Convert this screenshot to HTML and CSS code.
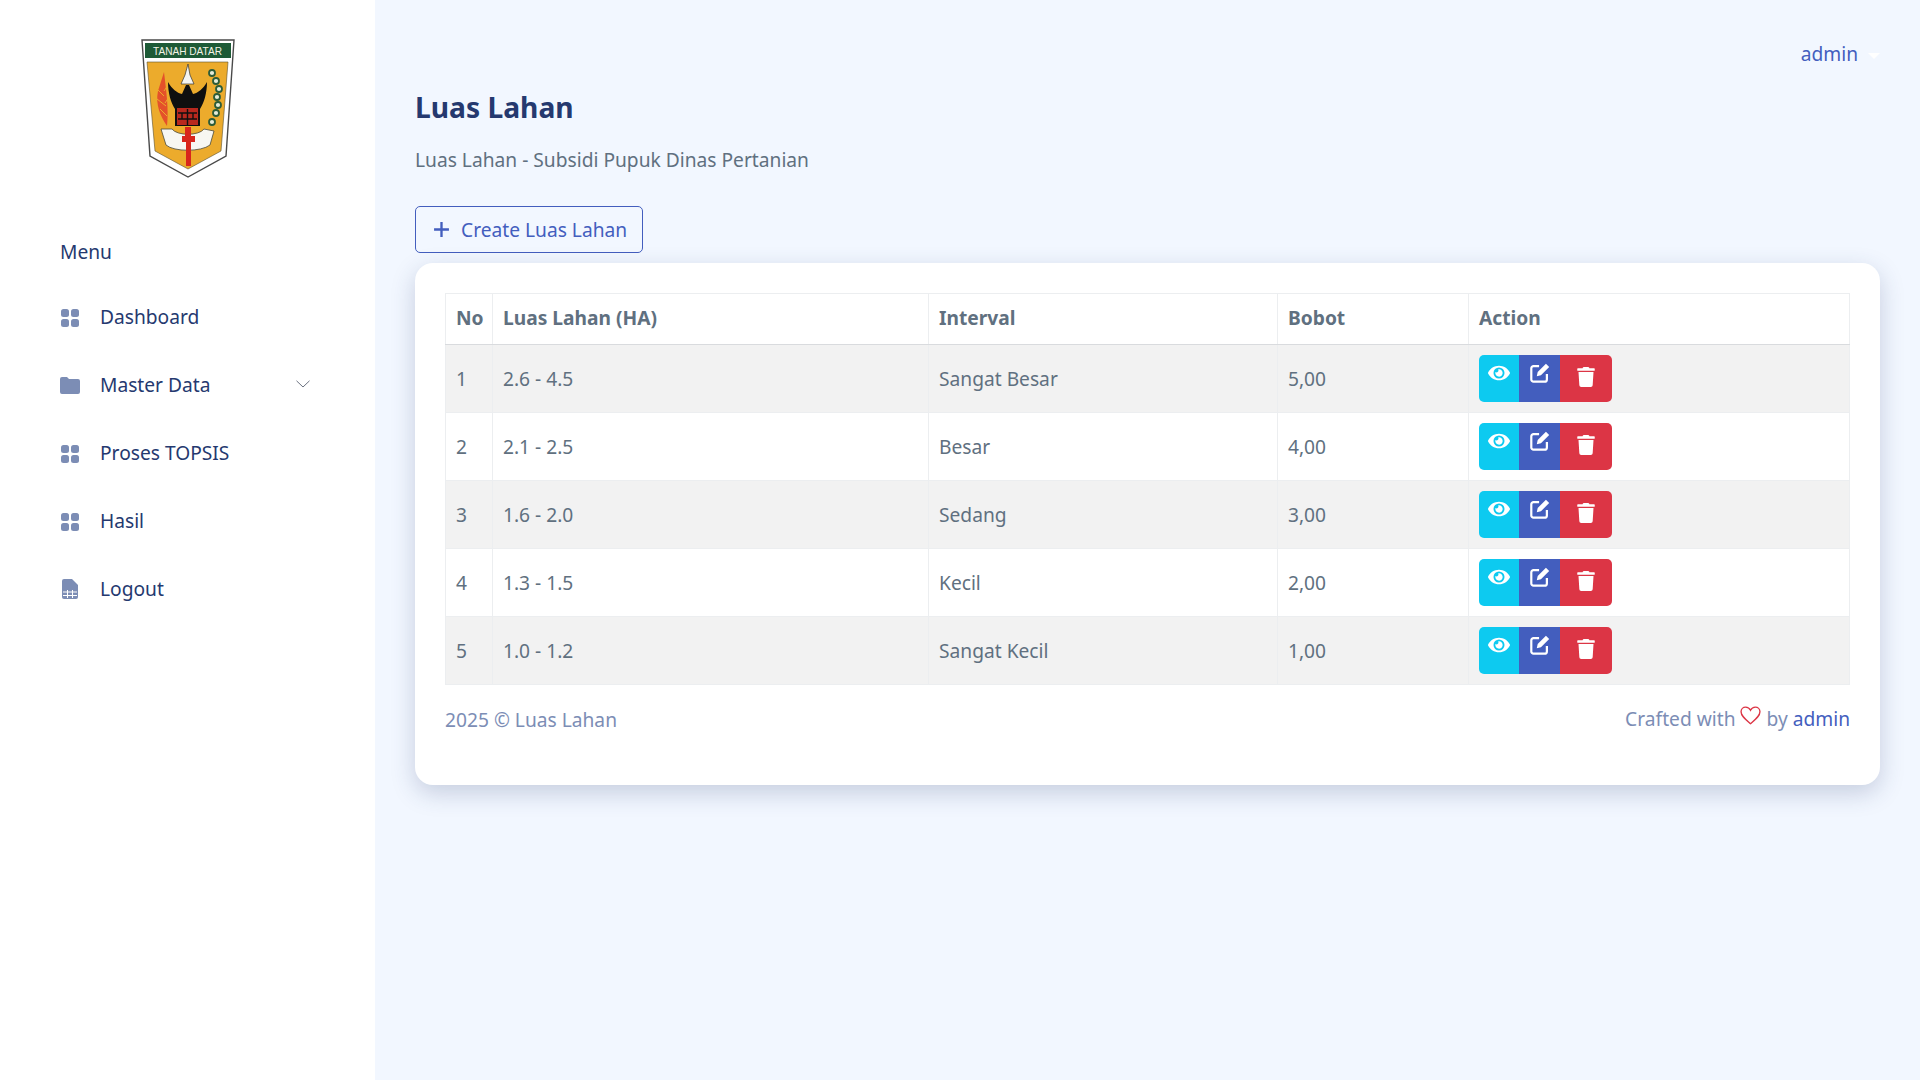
FILE: index.html
```html
<!DOCTYPE html>
<html lang="en">
<head>
    <meta charset="UTF-8">
    <title>Luas Lahan</title>
    <link rel="stylesheet" href="styles.css">
</head>
<body>
<svg class="defs" width="0" height="0">
    <symbol id="i-grid" viewBox="0 0 20 20">
        <rect x="1" y="2" width="8" height="8" rx="2.5"/><rect x="11" y="2" width="8" height="8" rx="2.5"/>
        <rect x="1" y="12" width="8" height="8" rx="2.5"/><rect x="11" y="12" width="8" height="8" rx="2.5"/>
    </symbol>
    <symbol id="i-eye" viewBox="0 0 576 512">
        <path d="M572.52 241.4C518.29 135.59 410.93 64 288 64S57.68 135.64 3.48 241.41a32.35 32.35 0 0 0 0 29.19C57.71 376.41 165.07 448 288 448s230.32-71.64 284.52-177.41a32.35 32.35 0 0 0 0-29.19zM288 400a144 144 0 1 1 144-144 143.93 143.93 0 0 1-144 144zm0-240a95.31 95.31 0 0 0-25.31 3.79 47.85 47.85 0 0 1-66.9 66.9A95.78 95.78 0 1 0 288 160z"/>
    </symbol>
    <symbol id="i-edit" viewBox="0 0 24 24">
        <path d="M11 4.500H5a2.500 2.500 0 0 0-2.500 2.500v12A2.500 2.500 0 0 0 5 21.500h12a2.500 2.500 0 0 0 2.500-2.500v-6" fill="none" stroke="#fff" stroke-width="2.400"/>
        <path d="M8.500 15.500 9.500 11 18.500 2 22 5.500 13 14.500Z"/>
    </symbol>
    <symbol id="i-trash" viewBox="0 0 448 512">
        <path d="M432 32H312l-9.4-18.7A24 24 0 0 0 281.1 0H166.8a23.72 23.72 0 0 0-21.4 13.3L136 32H16A16 16 0 0 0 0 48v32a16 16 0 0 0 16 16h416a16 16 0 0 0 16-16V48a16 16 0 0 0-16-16zM53.2 467a48 48 0 0 0 47.9 45h245.8a48 48 0 0 0 47.9-45L416 128H32z"/>
    </symbol>
</svg>

<aside class="sidebar">
    <div class="logo">
        <svg width="94" height="140" viewBox="0 0 94 140">
            <!-- shield -->
            <path d="M1 1H93L85 117 47 138 9 117Z" fill="#fff" stroke="#4a4a4a" stroke-width="1.400"/>
            <path d="M4 4H90V19H4Z" fill="#1d5a36"/>
            <text x="46.500" y="16" class="logo-text" text-anchor="middle" textLength="69" lengthAdjust="spacingAndGlyphs">TANAH DATAR</text>
            <path d="M6 23H87L80 112 47 130 14 112Z" fill="#ecab2c" stroke="#5a5030" stroke-width=".6"/>
            <!-- rice -->
            <path d="M23 33C25 50 28 70 26 87 20 78 14 66 17 52Z" fill="#e4512a"/>
            <path d="M16 50 23 57M16 60 25 67M19 70 26 77M27 46 23 52M28 58 24 64" stroke="#ecab2c" stroke-width="1"/>
            <!-- tower and roof -->
            <path d="M47 25 49 36 53 45H40L44 36Z" fill="#f4f4f0" stroke="#333" stroke-width=".7"/>
            <path d="M27 43C31 50 36 54 41 55L45 46H48L52 55C57 54 62 50 66 43 66 54 63 64 59 70V87H34V70C30 64 27 54 27 43Z" fill="#0f0f0f"/>
            <path d="M36 69H57V86H36Z" fill="#b8281e"/>
            <path d="M37 74H56M37 80H56M46.500 70V86M41 74V80M52 74V80" stroke="#101010" stroke-width="1.400"/>
            <!-- cotton -->
            <g fill="#e6ecd8" stroke="#2d5c38" stroke-width="1.800">
                <circle cx="71" cy="34" r="3"/><circle cx="75" cy="42" r="3"/><circle cx="78" cy="50" r="3"/><circle cx="76" cy="58" r="3"/><circle cx="77" cy="66" r="3"/><circle cx="75" cy="74" r="3"/><circle cx="71" cy="83" r="3"/>
            </g>
            <!-- ribbon and sword -->
            <path d="M20 90 31 90C36 97 58 97 63 90L73 92 69 106C60 113 33 113 25 106Z" fill="#f7f7f2" stroke="#4a4a3a" stroke-width=".8"/>
            <path d="M44 88H50V97H54V103H50V127H45V103H41V97H44Z" fill="#d8261c"/>
        </svg>
    </div>
    <div class="menu-title">Menu</div>
    <ul class="menu">
        <li><svg class="menu-icon"><use href="#i-grid"/></svg>Dashboard</li>
        <li>
            <svg class="menu-icon" viewBox="0 0 20 20"><path d="M0 4a2 2 0 0 1 2-2h5l2 2h9a2 2 0 0 1 2 2v11a2 2 0 0 1-2 2H2a2 2 0 0 1-2-2z"/></svg>
            Master Data
            <svg class="chevron" viewBox="0 0 14 8"><path d="M.5.8 7 7 13.5.8"/></svg>
        </li>
        <li><svg class="menu-icon"><use href="#i-grid"/></svg>Proses TOPSIS</li>
        <li><svg class="menu-icon"><use href="#i-grid"/></svg>Hasil</li>
        <li>
            <svg class="menu-icon" viewBox="0 0 20 20">
                <path d="M4 0h8l6 6v12a2 2 0 0 1-2 2H4a2 2 0 0 1-2-2V2a2 2 0 0 1 2-2z"/>
                <path d="M3 13h14M3 16.500h14M7.500 11v8M12.500 11v8" stroke="#fff" stroke-width="1"/>
            </svg>
            Logout
        </li>
    </ul>
</aside>

<main class="content">
    <div class="topbar"><a class="user">admin<span class="caret"></span></a></div>
    <h1>Luas Lahan</h1>
    <p class="subtitle">Luas Lahan - Subsidi Pupuk Dinas Pertanian</p>
    <button class="btn-create">
        <svg viewBox="0 0 16 16"><path d="M8 1v14M1 8h14"/></svg>
        Create Luas Lahan
    </button>

    <section class="card">
        <table>
            <colgroup>
                <col class="col-no"><col class="col-luas"><col class="col-interval"><col class="col-bobot"><col>
            </colgroup>
            <thead>
                <tr><th>No</th><th>Luas Lahan (HA)</th><th>Interval</th><th>Bobot</th><th>Action</th></tr>
            </thead>
            <tbody id="rows"></tbody>
        </table>
        <footer class="foot">
            <span>2025 © Luas Lahan</span>
            <span>Crafted with
                <svg class="heart" viewBox="0 0 20 18"><path d="M10 16.800C5 12.500 1 9.500 1 5.500 1 2.800 3 1 5.400 1 7.300 1 9 2 10 4 11 2 12.700 1 14.600 1 17 1 19 2.800 19 5.500 19 9.500 15 12.500 10 16.800Z"/></svg>
                by <a>admin</a></span>
        </footer>
    </section>
</main>

<script>
    var data = [
        ["1", "2.6 - 4.5", "Sangat Besar", "5,00"],
        ["2", "2.1 - 2.5", "Besar", "4,00"],
        ["3", "1.6 - 2.0", "Sedang", "3,00"],
        ["4", "1.3 - 1.5", "Kecil", "2,00"],
        ["5", "1.0 - 1.2", "Sangat Kecil", "1,00"]
    ];
    var html = "";
    for(var i = 0;i<data.length;i++){
        html += "<tr>";
        for(var j = 0;j<data[i].length;j++){
            html += "<td>" + data[i][j] + "</td>";
        }
        html += '<td><div class="actions">'
            + '<a class="act act-view"><svg><use href="#i-eye"/></svg></a>'
            + '<a class="act act-edit"><svg><use href="#i-edit"/></svg></a>'
            + '<a class="act act-del"><svg><use href="#i-trash"/></svg></a>'
            + "</div></td></tr>";
    }
    document.getElementById("rows").innerHTML = html;
</script>
</body>
</html>
```

FILE: styles.css
```css
*{
    margin:0;
    padding:0;
    box-sizing:border-box;
}
ul{
    list-style:none;
}
body{
    display:flex;
    min-height:1080px;
    background:#f2f7ff;
    font-family:"Noto Sans","Liberation Sans",sans-serif;
    font-size:19.2px;
    color:#607080;
}
.defs{
    position:absolute;
}

/* sidebar */
.sidebar{
    width:375px;
    flex:none;
    background:#fff;
    padding-top:39px;
}
.logo{
    height:138px;
    display:flex;
    justify-content:center;
}
.logo-text{
    font-size:11.5px;
    fill:#f3f3e6;
    font-family:"Liberation Sans",sans-serif;
}
.menu-title{
    margin-top:61px;
    padding-left:60px;
    line-height:28px;
    color:#25396f;
}
.menu{
    margin-top:16px;
}
.menu li{
    display:flex;
    align-items:center;
    height:68px;
    padding-left:60px;
    color:#25396f;
}
.menu-icon{
    width:20px;
    height:20px;
    margin-top:2px;
    margin-right:20px;
    fill:#7c8db5;
}
.chevron{
    width:14px;
    height:8px;
    margin-left:auto;
    margin-right:65px;
    fill:none;
    stroke:#6b7280;
    stroke-width:1;
}

/* content */
.content{
    flex:1;
    padding:0 40px;
}
.topbar{
    height:82px;
    display:flex;
    justify-content:flex-end;
    align-items:flex-end;
    padding-bottom:16px;
}
.user{
    color:#435ebe;
    line-height:24px;
}
.caret{
    display:inline-block;
    margin-left:10px;
    vertical-align:middle;
    border-top:6px solid #fff;
    border-left:6px solid transparent;
    border-right:6px solid transparent;
}
h1{
    font-size:28.2px;
    line-height:50px;
    font-weight:700;
    color:#25396f;
}
.subtitle{
    margin-top:14px;
    line-height:28px;
}
.btn-create{
    display:flex;
    align-items:center;
    gap:11px;
    width:228px;
    height:47px;
    margin-top:32px;
    padding-left:17px;
    background:none;
    border:1px solid #435ebe;
    border-radius:5px;
    color:#435ebe;
    font:inherit;
}
.btn-create svg{
    width:17px;
    height:17px;
    fill:none;
    stroke:#435ebe;
    stroke-width:2.2;
}
.card{
    height:522px;
    margin-top:10px;
    padding:30px;
    background:#fff;
    border-radius:18px;
    box-shadow:0 8px 24px rgba(40,60,110,.22);
}

/* table */
table{
    width:100%;
    table-layout:fixed;
    border-collapse:collapse;
}
.col-no{ width:47px; }
.col-luas{ width:436px; }
.col-interval{ width:349px; }
.col-bobot{ width:191px; }
th,td{
    padding:0 10px;
    border:1px solid #eceef0;
    text-align:left;
}
th{
    height:51px;
    padding-bottom:3px;
    font-weight:700;
    border-bottom:1px solid #d9dbde;
}
td{
    height:68px;
}
tbody tr:nth-child(odd){
    background:#f2f2f2;
}
.actions{
    display:flex;
    width:133px;
    height:47px;
    border-radius:5px;
    overflow:hidden;
}
.act{
    display:flex;
    justify-content:center;
    padding-top:8px;
    fill:#fff;
}
.act svg{
    width:22px;
    height:20px;
}
.act-view{ width:40px; background:#0dcaf0; }
.act-edit{ width:41px; background:#435ebe; padding-top:7px; }
.act-edit svg{ height:22px; }
.act-del{ width:52px; background:#dc3545; padding-top:12px; }

.foot{
    display:flex;
    justify-content:space-between;
    align-items:center;
    margin-top:20px;
    line-height:28px;
    color:#7c8db5;
}
.foot a{
    color:#435ebe;
}
.heart{
    width:21px;
    height:19px;
    margin-bottom:10px;
    vertical-align:middle;
    fill:none;
    stroke:#dc3545;
    stroke-width:1.300;
}
```
